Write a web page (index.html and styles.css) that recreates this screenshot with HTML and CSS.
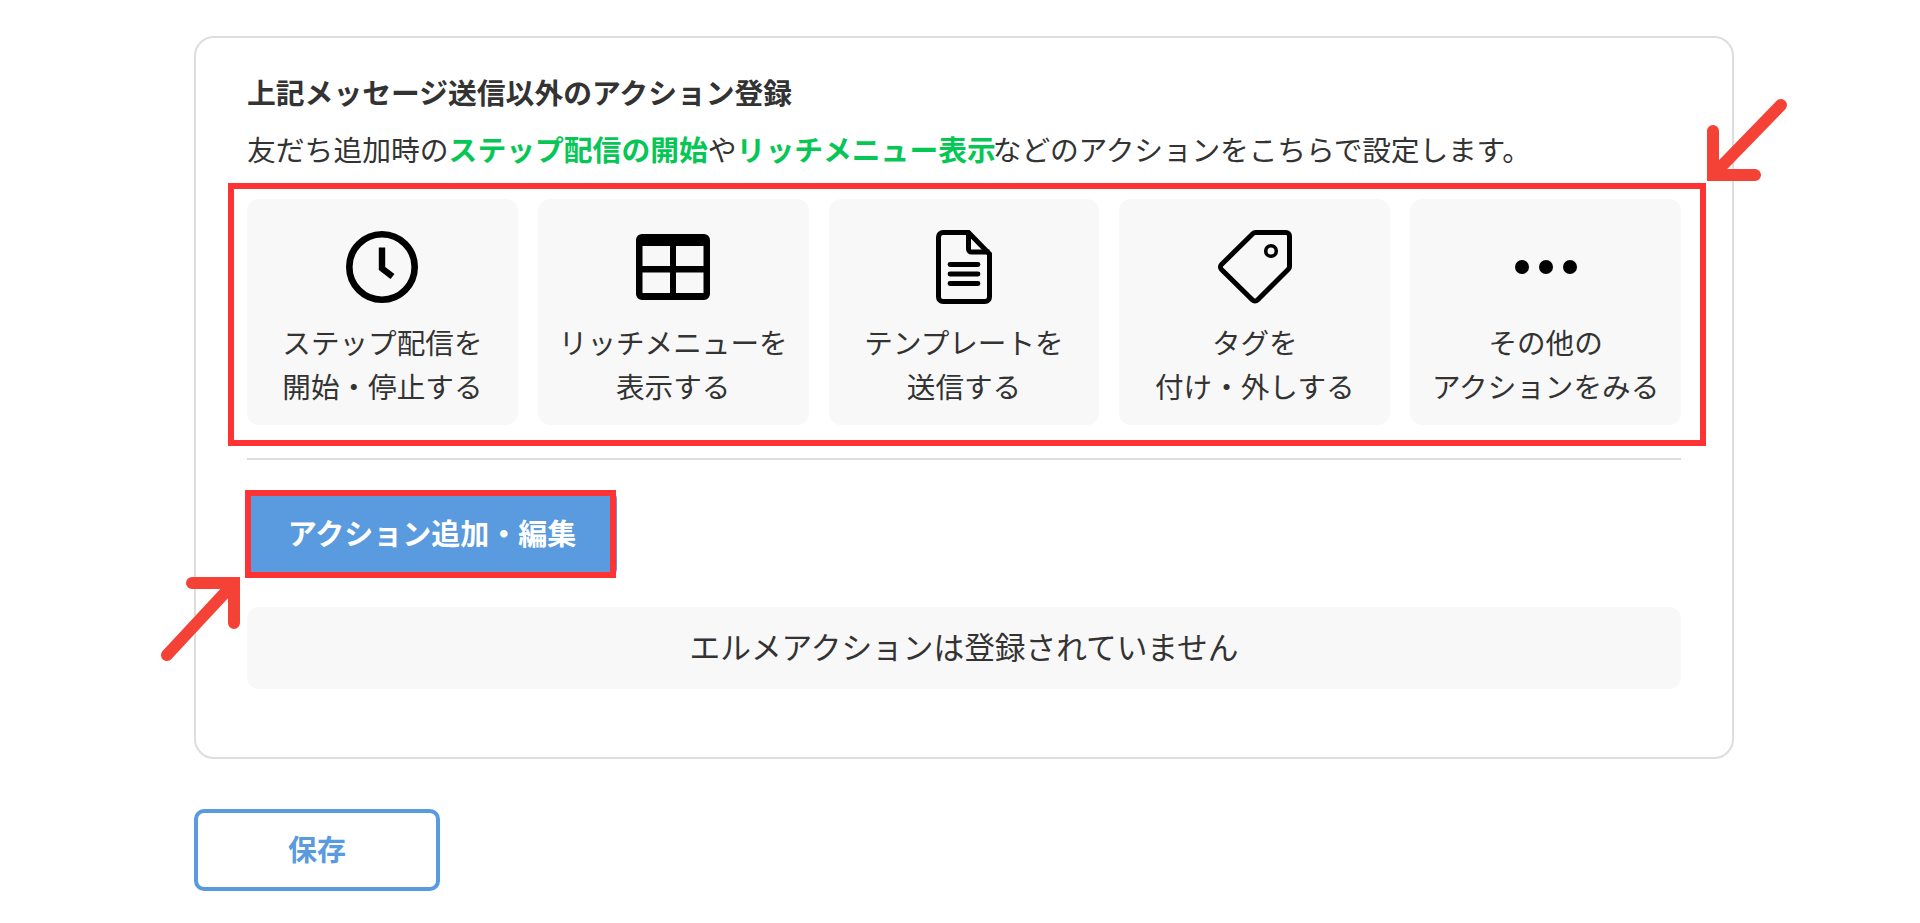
FILE: index.html
```html
<!DOCTYPE html>
<html lang="ja">
<head>
    <meta charset="UTF-8">
    <meta name="viewport" content="width=device-width, initial-scale=1.0">
    <title>アクション登録</title>
    <link rel="stylesheet" href="styles.css">
</head>
<body>
    <div class="page">
        <div class="card">
            <div class="card-title">上記メッセージ送信以外のアクション登録</div>
            <p class="card-desc">友だち追加時の<strong class="green">ステップ配信の開始</strong>や<strong class="green">リッチメニュー表示</strong><span class="tight">などのアクションをこちらで設定します。</span></p>

            <div class="tiles">
                <div class="tile">
                    <svg class="tile-icon" viewBox="0 0 80 80">
                        <circle cx="40" cy="40" r="32.7" fill="none" stroke="#000" stroke-width="6.6"/>
                        <path d="M40 20.5V41.5L50.5 49.5" fill="none" stroke="#000" stroke-width="6.4" stroke-linejoin="miter"/>
                    </svg>
                    <div class="tile-label">ステップ配信を<br>開始・停止する</div>
                </div>
                <div class="tile">
                    <svg class="tile-icon" viewBox="0 0 80 80">
                        <path fill-rule="evenodd" d="M9 7H71A6 6 0 0 1 77 13V67A6 6 0 0 1 71 73H9A6 6 0 0 1 3 67V13A6 6 0 0 1 9 7ZM9.5 19V39H37V19ZM43 19V39H70.5V19ZM9.5 45.500V66H37V45.500ZM43 45.500V66H70.500V45.500Z"/>
                    </svg>
                    <div class="tile-label">リッチメニューを<br>表示する</div>
                </div>
                <div class="tile">
                    <svg class="tile-icon" viewBox="0 0 80 80">
                        <path d="M19 5.500H44.500L65.500 27V70A4.500 4.500 0 0 1 61 74.500H19A4.500 4.500 0 0 1 14.500 70V10A4.500 4.500 0 0 1 19 5.500Z" fill="none" stroke="#000" stroke-width="5"/>
                        <path d="M44.500 5.500V22A3 3 0 0 0 47.500 25H65.500" fill="none" stroke="#000" stroke-width="5"/>
                        <path d="M26 37.500H54M26 47H54M26 56.500H54" fill="none" stroke="#000" stroke-width="4.800" stroke-linecap="round"/>
                    </svg>
                    <div class="tile-label">テンプレートを<br>送信する</div>
                </div>
                <div class="tile">
                    <svg class="tile-icon" viewBox="0 0 80 80">
                        <path d="M40.500 5.500H71A3.500 3.500 0 0 1 74.500 9V39.500A4 4 0 0 1 73.300 42.300L42.500 73A3.500 3.500 0 0 1 37.500 73L6.500 42.500A3.500 3.500 0 0 1 6.500 37.500L38 6.500A3.500 3.500 0 0 1 40.500 5.500Z" fill="none" stroke="#000" stroke-width="5"/>
                        <circle cx="56" cy="24" r="5.300" fill="none" stroke="#000" stroke-width="3.600"/>
                    </svg>
                    <div class="tile-label">タグを<br>付け・外しする</div>
                </div>
                <div class="tile">
                    <svg class="tile-icon" viewBox="0 0 80 80">
                        <circle cx="16" cy="40" r="7"/>
                        <circle cx="40" cy="40" r="7"/>
                        <circle cx="64" cy="40" r="7"/>
                    </svg>
                    <div class="tile-label">その他の<br>アクションをみる</div>
                </div>
                <div class="red-frame frame-tiles"></div>
            </div>

            <hr class="divider">

            <div class="btn-wrap">
                <button class="btn-action">アクション追加・編集</button>
                <div class="red-frame frame-btn"></div>
            </div>

            <div class="empty-box">エルメアクションは登録されていません</div>
        </div>

        <button class="btn-save">保存</button>

        <!-- arrows drawn over the screenshot -->
        <svg class="arrow arrow-top" viewBox="0 0 96 96">
            <path d="M76 6L8 76M8 32V76H50" fill="none" stroke="#f44336" stroke-width="12" stroke-linecap="round" stroke-linejoin="miter"/>
        </svg>
        <svg class="arrow arrow-bottom" viewBox="0 0 96 96">
            <path d="M12 82L79 10M37 10H79V50" fill="none" stroke="#f44336" stroke-width="12" stroke-linecap="round" stroke-linejoin="miter"/>
        </svg>
    </div>
</body>
</html>
```

FILE: styles.css
```css
* {
    box-sizing: border-box;
}
body {
    margin: 0;
    background-color: #fff;
    color: #333;
    font-family: "Noto Sans CJK JP", "Noto Sans", sans-serif;
    font-size: 28.6px;
}
.page {
    position: relative;
    height: 923px;
    overflow: hidden;
    padding: 36px 186px 0 194px;
}
.card {
    border: 2px solid #ddd;
    border-radius: 20px;
    padding: 32px 51px 68px;
}
.card-title {
    font-size: 28.800px;
    font-weight: bold;
    line-height: 44px;
}
.card-desc {
    margin: 13px 0 0;
    font-size: 28.800px;
    line-height: 44px;
    white-space: nowrap;
}
.card-desc strong {
    font-weight: bold;
}
.tight {
    margin-left: -3px;
    letter-spacing: -0.200px;
}
.green {
    color: #06c755;
}
.tiles {
    position: relative;
    display: grid;
    grid-template-columns: repeat(5, 1fr);
    gap: 20px;
    margin-top: 28px;
}
.tile {
    display: flex;
    flex-direction: column;
    align-items: center;
    height: 226px;
    padding-top: 28px;
    background-color: #f8f8f8;
    border-radius: 12px;
}
.tile-icon {
    width: 80px;
    height: 80px;
    flex-shrink: 0;
}
.tile-label {
    margin-top: 13px;
    line-height: 44px;
    text-align: center;
    white-space: nowrap;
}
.red-frame {
    position: absolute;
    border: 6px solid #ff3333;
    pointer-events: none;
}
.frame-tiles {
    top: -16px;
    right: -25px;
    bottom: -21px;
    left: -19px;
}
.divider {
    height: 2px;
    margin: 33px 0 0;
    border: none;
    background-color: #ddd;
}
.btn-wrap {
    position: relative;
    width: 370px;
    margin-top: 31px;
}
.btn-action {
    display: block;
    width: 100%;
    height: 86px;
    border: none;
    border-radius: 8px;
    background-color: #5a9ade;
    color: #fff;
    font-family: inherit;
    font-size: 29px;
    font-weight: bold;
    padding: 0 0 5px;
}
.frame-btn {
    top: -1px;
    right: 1px;
    bottom: -1px;
    left: -2px;
}
.empty-box {
    display: flex;
    align-items: center;
    justify-content: center;
    height: 82px;
    margin-top: 30px;
    padding-bottom: 5px;
    background-color: #f8f8f8;
    border-radius: 12px;
    font-size: 30.700px;
}
.btn-save {
    display: block;
    width: 246px;
    height: 82px;
    margin-top: 50px;
    padding: 0 0 4px;
    border: 4px solid #5a9ade;
    border-radius: 10px;
    background-color: #fff;
    color: #5a9ade;
    font-family: inherit;
    font-size: 29px;
    font-weight: bold;
}
.arrow {
    position: absolute;
    width: 96px;
    height: 96px;
}
.arrow-top {
    top: 99px;
    left: 1705px;
}
.arrow-bottom {
    top: 573px;
    left: 155px;
}
```
